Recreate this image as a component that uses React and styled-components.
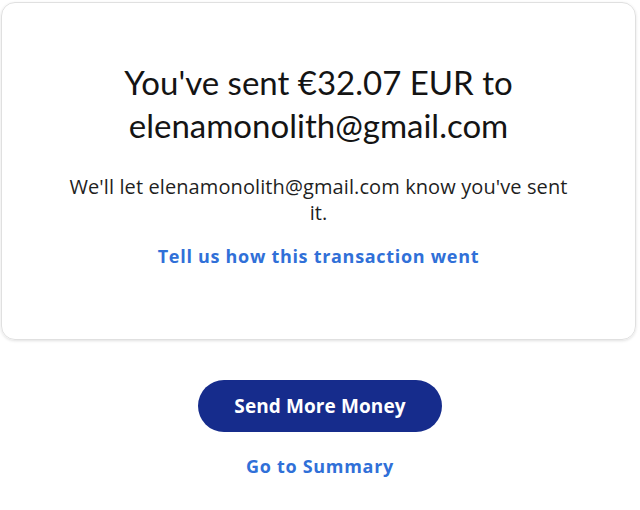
import React from "react"
import styled, { createGlobalStyle } from "styled-components"

const colors = {
  ink: "#141414",
  body: "#1f1f1f",
  link: "#3070d8",
  navy: "#162c8c",
  border: "#e0e0e0",
}

const fonts = {
  big: 'Lato, "Noto Sans", sans-serif',
  small: '"Open Sans", "Noto Sans", sans-serif',
}

const GlobalStyle = createGlobalStyle`
  html, body {
    margin: 0;
    padding: 0;
    background: #ffffff;
    font-family: ${fonts.small};
  }
`

const Page = styled.main`
  display: flex;
  flex-direction: column;
  align-items: center;
  width: 640px;
  padding-top: 2px;
  box-sizing: border-box;
`

const Card = styled.section`
  display: flex;
  flex-direction: column;
  align-items: center;
  width: 635px;
  height: 338px;
  margin-left: -3px;
  box-sizing: border-box;
  padding: 58px 40px 0;
  border: 1px solid ${colors.border};
  border-radius: 14px;
  box-shadow: 0 1px 3px rgba(0, 0, 0, 0.12);
  text-align: center;
`

const Heading = styled.h1`
  margin: 0;
  max-width: 440px;
  font-family: ${fonts.big};
  font-size: 33px;
  line-height: 43px;
  font-weight: 400;
  color: ${colors.ink};
`

const Message = styled.p`
  margin: 27px 0 0;
  max-width: 512px;
  font-size: 20px;
  line-height: 26px;
  letter-spacing: 0.1px;
  color: ${colors.body};
`

const TextLink = styled.a`
  display: block;
  margin-top: ${(p) => p.$top || 0}px;
  font-size: 18px;
  line-height: 24px;
  font-weight: 700;
  letter-spacing: 0.7px;
  color: ${colors.link};
  text-decoration: none;
  cursor: pointer;
`

const PrimaryButton = styled.button`
  margin-top: 40px;
  width: 244px;
  height: 52px;
  border: none;
  border-radius: 26px;
  background: ${colors.navy};
  color: #ffffff;
  font-family: inherit;
  font-size: 19px;
  font-weight: 700;
  letter-spacing: 0.1px;
  cursor: pointer;
`

const App = () => {
  return (
    <>
      <GlobalStyle />
      <Page>
        <Card>
          <Heading>You've sent €32.07 EUR to elenamonolith@gmail.com</Heading>
          <Message>
            We'll let elenamonolith@gmail.com know you've sent it.
          </Message>
          <TextLink $top={18}>Tell us how this transaction went</TextLink>
        </Card>
        <PrimaryButton>Send More Money</PrimaryButton>
        <TextLink $top={22}>Go to Summary</TextLink>
      </Page>
    </>
  )
}

export default App
